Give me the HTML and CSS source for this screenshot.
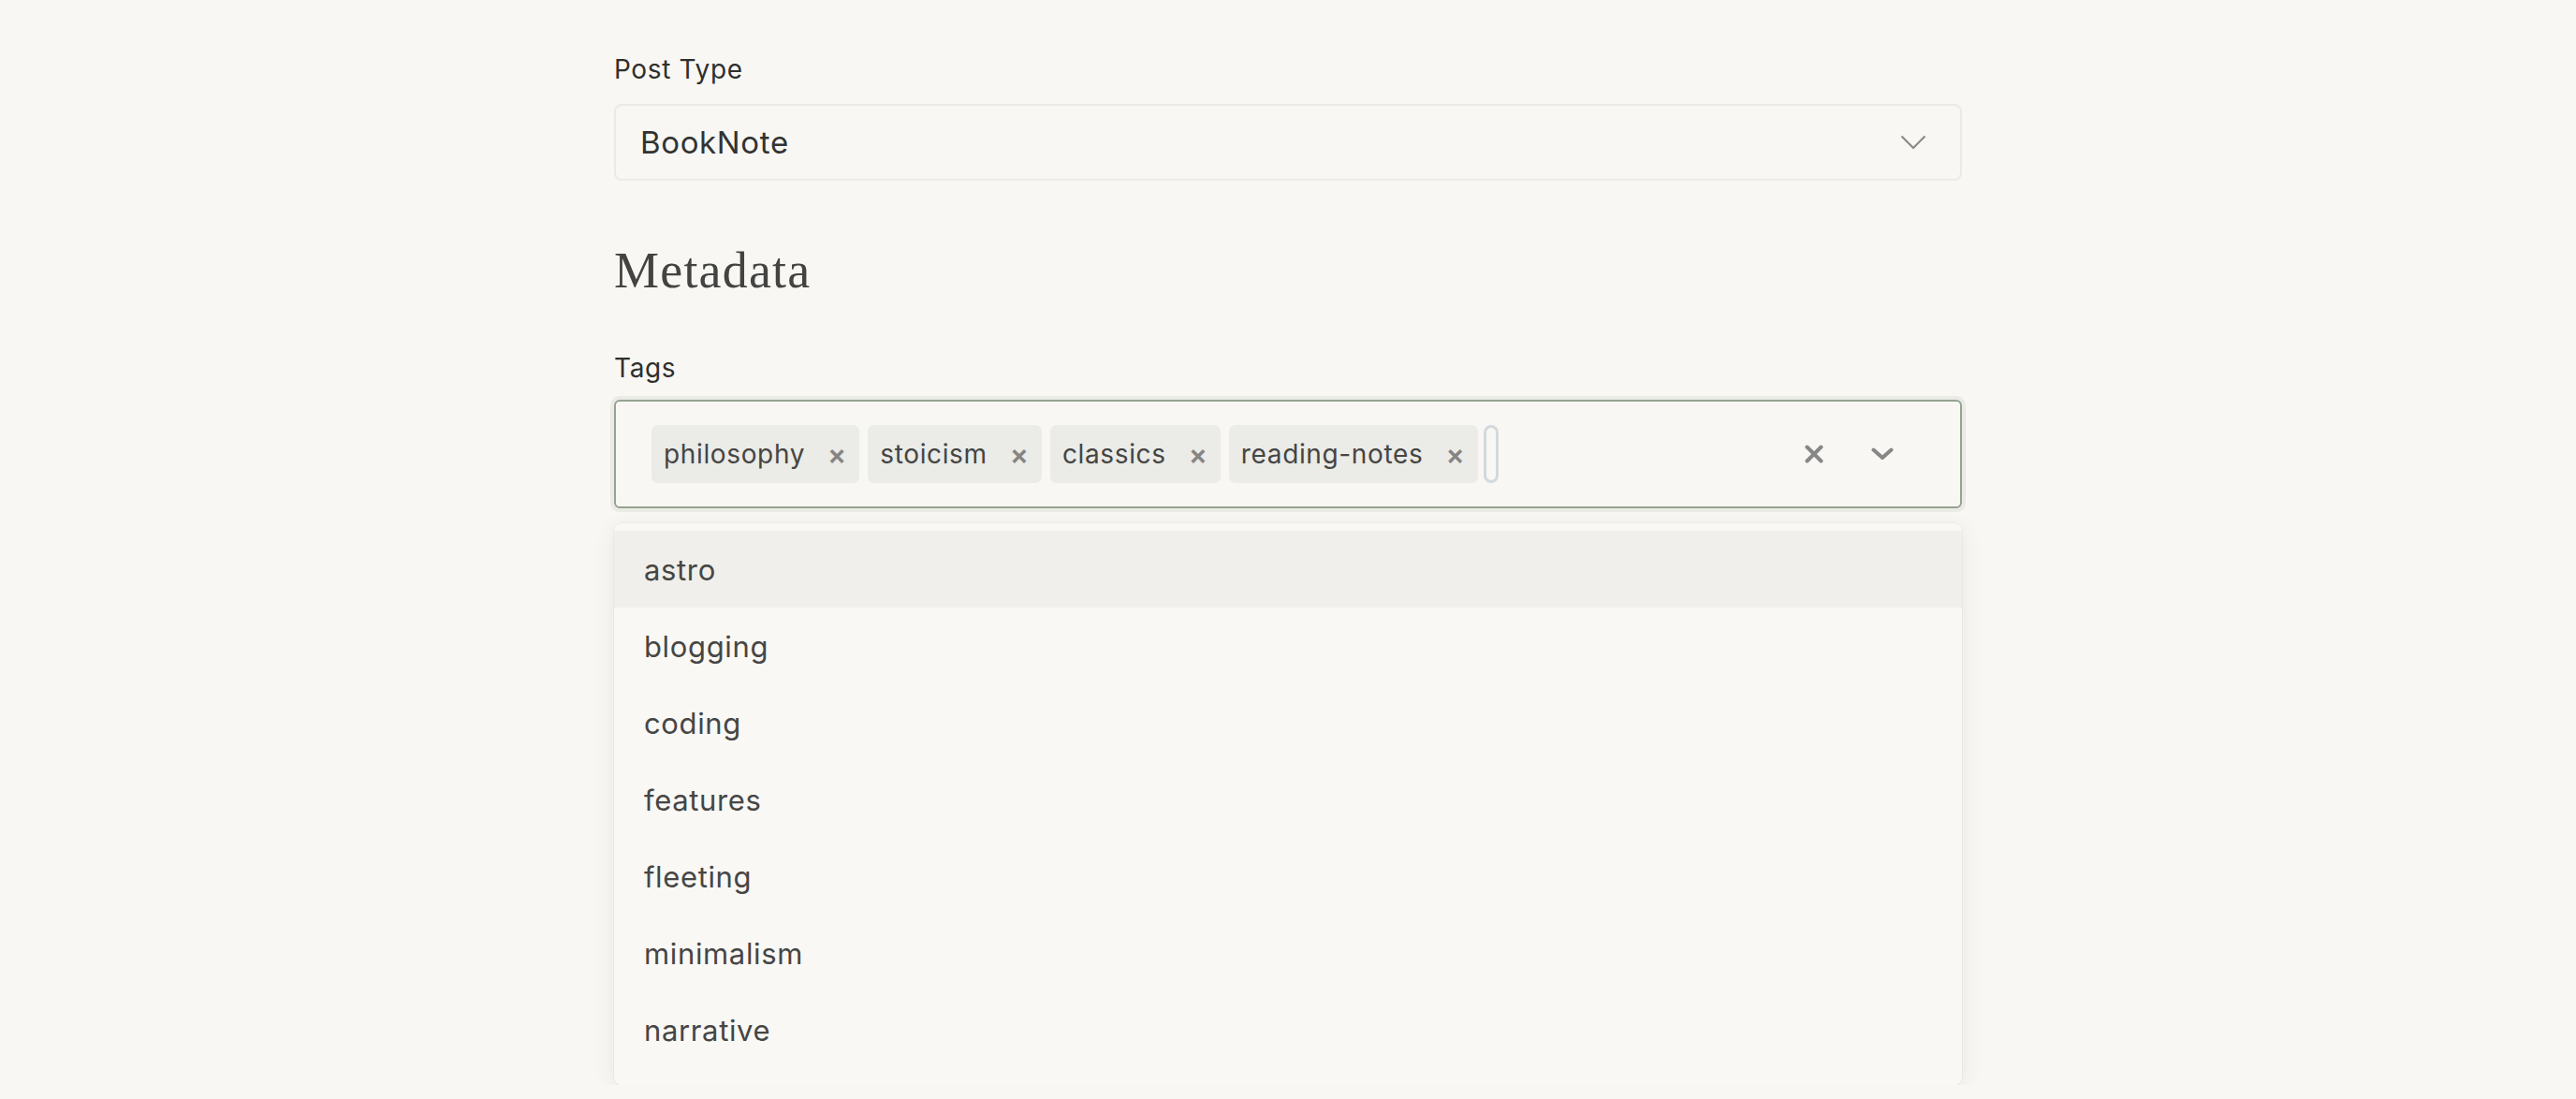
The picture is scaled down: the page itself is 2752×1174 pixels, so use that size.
FILE: index.html
```html
<!DOCTYPE html>
<html lang="en">
<head>
<meta charset="utf-8">
<title>Metadata</title>
<link rel="stylesheet" href="styles.css">
</head>
<body>
<main class="page">
  <div class="field">
    <label class="label">Post Type</label>
    <div class="select">
      <span class="select-value">BookNote</span>
      <svg class="select-chevron" width="28" height="16" viewBox="0 0 28 16"><path d="M1.5 1.5 L14 14 L26.5 1.5" fill="none" stroke="#8a8a88" stroke-width="2.2"/></svg>
    </div>
  </div>

  <h2 class="heading">Metadata</h2>

  <div class="field">
    <label class="label">Tags</label>
    <div class="tags-wrap">
      <div class="tags-box">
        <div class="chips">
          <span class="chip"><span class="chip-text">philosophy</span><span class="chip-x">×</span></span>
          <span class="chip"><span class="chip-text">stoicism</span><span class="chip-x">×</span></span>
          <span class="chip"><span class="chip-text">classics</span><span class="chip-x">×</span></span>
          <span class="chip"><span class="chip-text">reading-notes</span><span class="chip-x">×</span></span>
          <span class="cursor"></span>
        </div>
        <div class="indicators">
          <svg class="ind ind-clear" width="20" height="20" viewBox="0 0 20 20"><path d="M2.5 2.5 L17.5 17.5 M17.5 2.5 L2.5 17.5" stroke="#878786" stroke-width="4" stroke-linecap="round"/></svg>
          <svg class="ind ind-chev" width="24" height="14" viewBox="0 0 24 14"><path d="M2.5 2.5 L12 11 L21.5 2.5" fill="none" stroke="#878786" stroke-width="4" stroke-linecap="round" stroke-linejoin="round"/></svg>
        </div>
      </div>
      <ul class="menu">
        <li class="option option-active">astro</li>
        <li class="option">blogging</li>
        <li class="option">coding</li>
        <li class="option">features</li>
        <li class="option">fleeting</li>
        <li class="option">minimalism</li>
        <li class="option">narrative</li>
      </ul>
    </div>
  </div>
</main>
</body>
</html>
```

FILE: styles.css
```css
html, body {
  margin: 0;
  padding: 0;
  background: #f8f7f4;
}

body {
  font-family: Inter, "Noto Sans", "DejaVu Sans", sans-serif;
  color: #333331;
  letter-spacing: 0.04em;
}

.page {
  width: 1440px;
  margin: 0 auto;
  padding-top: 54px;
}

.field {
  display: flex;
  flex-direction: column;
}

.label {
  font-size: 28px;
  line-height: 40px;
  color: #2f2f2d;
  margin-bottom: 17px;
}

.select {
  box-sizing: border-box;
  height: 82px;
  border: 2px solid #ebeae6;
  border-radius: 8px;
  display: flex;
  align-items: center;
  justify-content: space-between;
  padding: 0 36px 0 26px;
}

.select-value {
  font-size: 33px;
  color: #333331;
}

.heading {
  font-family: "Liberation Serif", "Times New Roman", serif;
  font-weight: 400;
  font-size: 54px;
  line-height: 60px;
  letter-spacing: 1.2px;
  color: #434341;
  margin: 66px 0 54px;
}

.tags-wrap {
  margin-top: -3px;
}

.tags-box {
  box-sizing: border-box;
  height: 116px;
  border: 2px solid #95a390;
  border-radius: 6px;
  box-shadow: 0 0 0 4px #ebebe6;
  display: flex;
  align-items: center;
  justify-content: space-between;
  padding: 0 0 0 38px;
}

.chips {
  display: flex;
  align-items: center;
  gap: 9px;
}

.chip {
  display: flex;
  align-items: center;
  height: 62px;
  box-sizing: border-box;
  padding: 0 14px 0 13px;
  background: #ebebe7;
  border-radius: 7px;
  font-size: 28px;
  color: #454543;
}

.chip-x {
  margin-left: 24px;
  font-size: 30px;
  color: #858583;
  font-weight: 600;
  letter-spacing: 0;
}

.cursor {
  box-sizing: border-box;
  width: 16px;
  height: 62px;
  border: 3px solid #d3d9dc;
  border-radius: 8px;
  margin-left: -3px;
}

.indicators {
  display: flex;
  align-items: center;
  gap: 51px;
  padding-right: 71px;
}

.menu {
  margin: 16px 0 0;
  padding: 8px 0 18px;
  list-style: none;
  background: #f9f8f5;
  border-radius: 8px;
  box-shadow: 0 6px 24px rgba(60, 55, 40, 0.08), 0 0 0 1px rgba(60, 55, 40, 0.04);
}

.option {
  height: 82px;
  display: flex;
  align-items: center;
  padding-left: 32px;
  font-size: 31px;
  color: #464644;
}

.option-active {
  background: #f0efeb;
}
```
